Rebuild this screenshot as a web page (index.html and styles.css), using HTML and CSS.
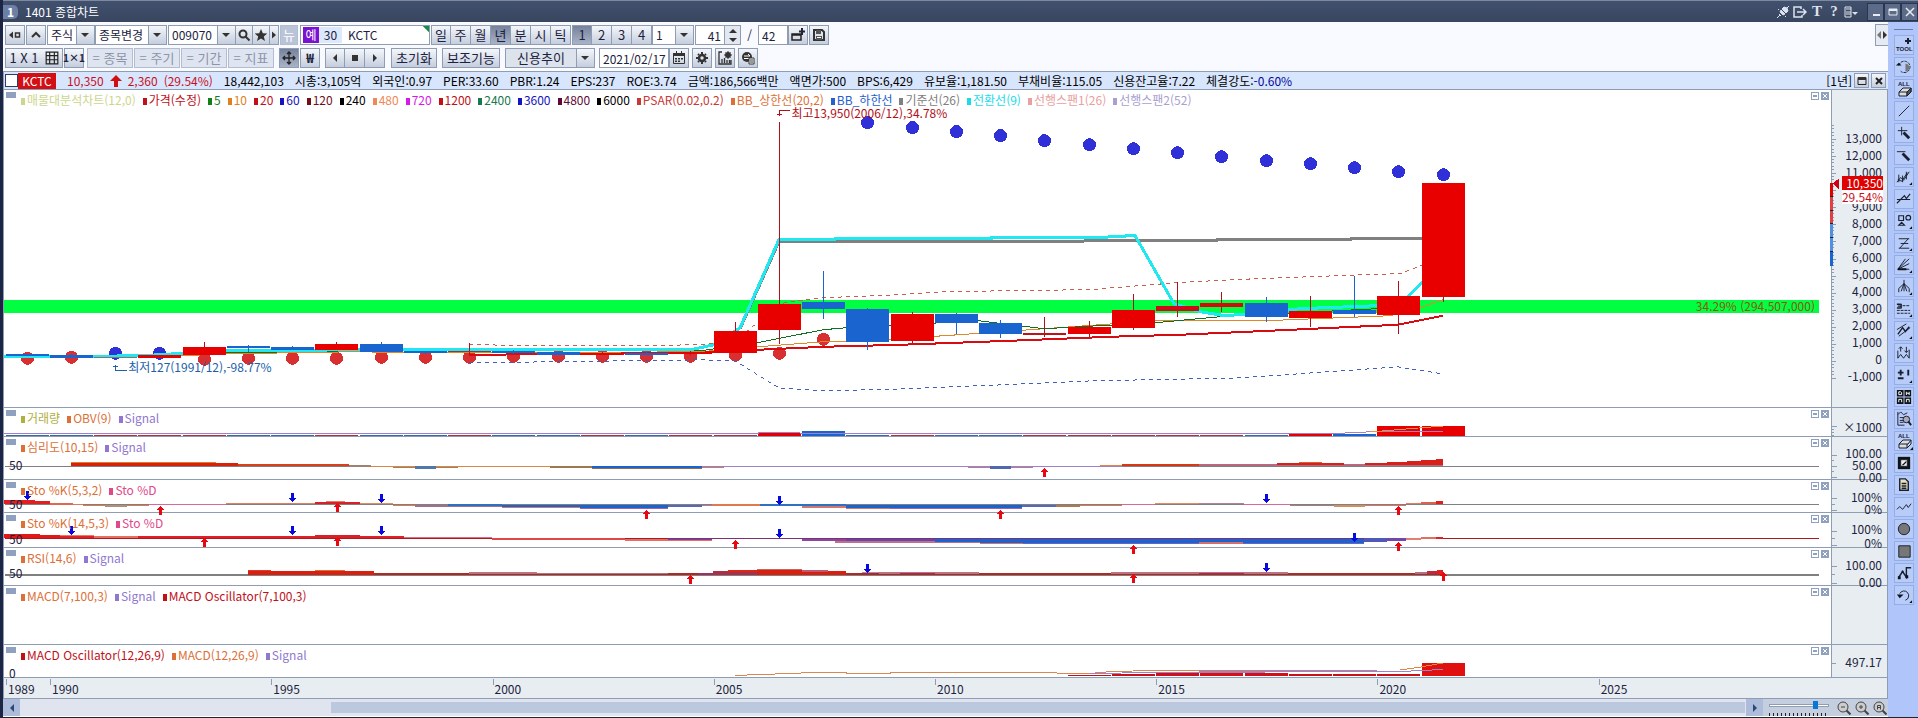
FILE: index.html
```html
<!DOCTYPE html>
<html lang="ko">
<head>
    <meta charset="UTF-8">
    <meta name="viewport" content="width=device-width, initial-scale=1.0">
    <title>1401 종합차트</title>
    <link rel="stylesheet" href="styles.css">
</head>
<body>

    <header class="titlebar">
        <span class="badge">1</span>
        <h1>1401 종합차트</h1>
        <div class="title-tools">
            <button aria-label="연결"><svg viewBox="0 0 14 14"><path d="M1 13l3-3M10 4l3-3M4 7l3 3 2-1-4-4zM6 4l4 4 2-2-1-3-3-1zM3 9l2 2M2 5l1-1M9 12l1-1" fill="#dde3ee" stroke="#dde3ee"/></svg></button>
            <button aria-label="내보내기"><svg viewBox="0 0 14 14"><path d="M8 4V2H1v10h8v-2M4 7h9M10 4l3 3-3 3" fill="none" stroke="#dde3ee" stroke-width="1.5"/></svg></button>
            <button class="serif">T</button>
            <button class="serif">?</button>
            <button aria-label="메뉴"><svg viewBox="0 0 14 14"><path d="M1 2h6v10H1zM2 4h5M2 7h5M2 9h5" fill="none" stroke="#dde3ee"/><path d="M8 7h6l-3 3z" fill="#dde3ee"/></svg></button>
        </div>
        <div class="window-buttons">
            <button aria-label="최소화"><svg viewBox="0 0 14 14"><path d="M4 9h7v2H4z" fill="#e8ecf4"/></svg></button>
            <button aria-label="최대화"><svg viewBox="0 0 14 14"><path d="M3 4h8v6H3z" fill="none" stroke="#e8ecf4"/><path d="M3 4h8v2H3z" fill="#e8ecf4"/></svg></button>
            <button aria-label="닫기"><svg viewBox="0 0 14 14"><path d="M3 3l8 8M11 3l-8 8" stroke="#e8ecf4" stroke-width="1.5"/></svg></button>
        </div>
    </header>

    <div class="workspace">
        <main>
            <div class="toolbars">
                <div class="toolbar">
                    <button class="btn" aria-label="접기"><svg viewBox="0 0 14 14"><path d="M5 3.500v7L1 7z"/><path d="M7.500 5h4v4h-4z" fill="none" stroke="#333" stroke-width="1.500"/></svg></button>
                    <button class="btn" aria-label="위로"><svg viewBox="0 0 14 14"><path d="M3 9l4-4 4 4" fill="none" stroke="#333" stroke-width="2"/></svg></button>
                    <div class="group">
                        <select class="w48" aria-label="시장"><option>주식</option></select>
                        <select class="w72" aria-label="종목변경"><option>종목변경</option></select>
                    </div>
                    <div class="group code">
                        <select class="w68" aria-label="종목코드"><option>009070</option></select>
                        <button class="btn narrow" aria-label="검색"><svg viewBox="0 0 14 14"><circle cx="6" cy="6" r="3.500" fill="none" stroke="#333" stroke-width="2"/><path d="M8.500 8.500l4 4" stroke="#333" stroke-width="2"/></svg></button>
                        <button class="btn narrow" aria-label="관심"><svg viewBox="0 0 14 14"><path d="M7 1l1.800 4.200 4.500.3-3.500 3 1.200 4.500-4-2.500L3 13l1.200-4.500-3.500-3 4.500-.3z"/></svg></button>
                        <button class="btn tiny" aria-label="더보기"><svg viewBox="0 0 8 14"><path d="M2 3.500v7L6 7z"/></svg></button>
                    </div>
                    <button class="btn off solid">뉴</button>
                    <div class="stock">
                        <b>예</b><span class="margin-rate">30</span><input aria-label="종목명" value="KCTC">
                    </div>
                    <div class="group period">
                        <button class="btn">일</button><button class="btn">주</button><button class="btn">월</button><button class="btn on">년</button><button class="btn">분</button><button class="btn">시</button><button class="btn">틱</button>
                    </div>
                    <div class="group count">
                        <button class="btn on">1</button><button class="btn">2</button><button class="btn">3</button><button class="btn">4</button>
                        <select class="w42" aria-label="주기"><option>1</option></select>
                    </div>
                    <div class="group">
                        <input class="w30 right" aria-label="조회 개수" value="41">
                        <div class="spin">
                            <button aria-label="증가"><svg viewBox="0 0 14 8"><path d="M3 6l4-4 4 4z"/></svg></button>
                            <button aria-label="감소"><svg viewBox="0 0 14 8"><path d="M3 2l4 4 4-4z"/></svg></button>
                        </div>
                    </div>
                    <span class="slash">/</span>
                    <div class="group">
                        <input class="w30" aria-label="전체 개수" value="42">
                        <button class="btn" aria-label="창 추가"><svg viewBox="0 0 14 14"><path d="M1 6h9v6H1zM1 7h9" fill="none" stroke="#222" stroke-width="1.500"/><path d="M11 0v7M8 3.500h6" stroke="#223" stroke-width="2"/></svg></button>
                    </div>
                    <button class="btn" aria-label="저장"><svg viewBox="0 0 14 14"><path d="M2 2h8l2 2v8H2z" fill="none" stroke="#333" stroke-width="2"/><path d="M4 2h5v4H4zM4 8h6v4H4z" fill="#555"/><path d="M5 9.500h4" stroke="#fff"/></svg></button>
                </div>

                <div class="toolbar">
                    <button class="btn w58">1 X 1 <svg viewBox="0 0 12 12"><path d="M1 1h10v10H1zM1 4h10M1 7.500h10M4 1v10M8 1v10" fill="none" stroke="#222"/></svg></button>
                    <button class="btn small-text">1×1</button>
                    <div class="group sync">
                        <button class="btn off w46">= 종목</button><button class="btn off w46">= 주기</button>
                        <button class="btn off w46">= 기간</button><button class="btn off w46">= 지표</button>
                    </div>
                    <button class="btn on move" aria-label="이동"><svg viewBox="0 0 14 14"><path d="M7 1v12M1 7h12M5 3l2-2 2 2M5 11l2 2 2-2M3 5L1 7l2 2M11 5l2 2-2 2" fill="none" stroke="#222" stroke-width="1.300"/></svg></button>
                    <button class="btn bold">₩</button>
                    <div class="group play">
                        <button class="btn" aria-label="이전"><svg viewBox="0 0 14 14"><path d="M9 3v8L5 7z"/></svg></button><button class="btn" aria-label="정지"><svg viewBox="0 0 14 14"><path d="M4 4h6v6H4z"/></svg></button><button class="btn" aria-label="다음"><svg viewBox="0 0 14 14"><path d="M5 3v8l4-4z"/></svg></button>
                    </div>
                    <button class="btn w46">초기화</button>
                    <button class="btn w58 aux">보조기능</button>
                    <select class="w90 face" aria-label="신용추이"><option>신용추이</option></select>
                    <div class="group date">
                        <input class="w70" aria-label="날짜" value="2021/02/17">
                        <button class="btn" aria-label="달력"><svg viewBox="0 0 14 14"><path d="M1.500 3h11v9.500h-11z" fill="none" stroke="#333"/><path d="M1 2h12v3H1zM4 0h1v2H4zM9 0h1v2H9zM3 7h2v1.500H3zM6 7h2v1.500H6zM9 7h2v1.500H9zM3 9.500h2V11H3zM6 9.500h2V11H6z"/></svg></button>
                    </div>
                    <button class="btn" aria-label="설정"><svg viewBox="0 0 14 14"><circle cx="7" cy="7" r="3" fill="none" stroke="#333" stroke-width="2.500"/><path d="M7 1v2M7 11v2M1 7h2M11 7h2M3 3l1 1M10 10l1 1M11 3l-1 1M4 10l-1 1" stroke="#333" stroke-width="2"/></svg></button>
                    <button class="btn gap" aria-label="차트 설정"><svg viewBox="0 0 14 14"><path d="M4 1H1v12h12V9M4 12V8M6.500 12V7M9 12V9M11.500 12v-3" fill="none" stroke="#333" stroke-width="1.300"/><circle cx="10" cy="4" r="2" fill="none" stroke="#333" stroke-width="2"/><path d="M10 0v8M6 4h8M7.500 1.500l5 5M12.500 1.500l-5 5" stroke="#333"/></svg></button>
                    <button class="btn gap" aria-label="차트 공유"><svg viewBox="0 0 14 14"><circle cx="6" cy="6" r="5"/><path d="M3 5h6M7 3l2 2M9 7.500H3" stroke="#fff"/><path d="M8 7h5v6H8z" fill="#fff" stroke="#333"/><path d="M9 9h3M9 11h3" stroke="#333"/></svg></button>
                </div>
                <button class="side-toggle" aria-label="도구 접기"><svg viewBox="0 0 12 14"><path d="M5 3v8L1 7z" fill="#777"/><path d="M7 3v8l4-4z" fill="#333"/></svg></button>
            </div>

            <div class="quote">
                <input type="checkbox" aria-label="KCTC 선택">
                <b class="ticker">KCTC</b>
                <div class="trade">
                    <span>10,350</span>
                    <svg viewBox="0 0 12 12"><path d="M6 0l6 6H8v6H4V6H0z"/></svg>
                    <span>2,360</span>
                    <span>(29.54%)</span>
                </div>
                <span>18,442,103</span>
                <span>시총:3,105억</span>
                <span>외국인:0.97</span>
                <span>PER:33.60</span>
                <span>PBR:1.24</span>
                <span>EPS:237</span>
                <span>ROE:3.74</span>
                <span>금액:186,566백만</span>
                <span>액면가:500</span>
                <span>BPS:6,429</span>
                <span>유보율:1,181.50</span>
                <span>부채비율:115.05</span>
                <span>신용잔고율:7.22</span>
                <span>체결강도:<em>-0.60%</em></span>
                <div class="term">
                    <span>[1년]</span>
                    <button class="btn mini" aria-label="최대화"><svg viewBox="0 0 10 10"><path d="M1 1.500h8v7H1z" fill="none" stroke="#222"/><path d="M1 1h8v3H1z"/></svg></button>
                    <button class="btn mini" aria-label="닫기"><svg viewBox="0 0 10 10"><path d="M2 2l6 6M8 2L2 8" stroke="#222" stroke-width="2"/></svg></button>
                </div>
            </div>

            <div class="chart">
                <section class="pane price">
                    <div class="plot">
                        <svg id="price" class="draw" viewBox="4 91 1827 316" preserveAspectRatio="none"></svg>
                        <div class="legend">
                            <span class="c-lime">매물대분석차트(12,0)</span><span class="c-red">가격(수정)</span><span class="c-green">5</span><span class="c-orange">10</span><span class="c-red">20</span><span class="c-blue">60</span><span class="c-maroon">120</span><span class="c-black">240</span><span class="c-salmon">480</span><span class="c-magenta">720</span><span class="c-red">1200</span><span class="c-teal">2400</span><span class="c-blue">3600</span><span class="c-plum">4800</span><span class="c-black">6000</span><span class="c-brick">PSAR(0.02,0.2)</span><span class="c-rust">BB_상한선(20,2)</span><span class="c-sky">BB_하한선</span><span class="c-gray">기준선(26)</span><span class="c-cyan">전환선(9)</span><span class="c-pink">선행스팬1(26)</span><span class="c-lilac">선행스팬2(52)</span>
                        </div>
                        <span class="note high">최고13,950(2006/12),34.78%</span>
                        <span class="note low">최저127(1991/12),-98.77%</span>
                        <span class="note band">34.29% (294,507,000)</span>
                    </div>
                    <div class="axis">
                        <svg id="price-axis" class="draw" viewBox="1832 91 55 316" preserveAspectRatio="none"></svg>
                        <ol>
                            <li>13,000</li><li>12,000</li><li>11,000</li><li></li><li>9,000</li><li>8,000</li><li>7,000</li><li>6,000</li><li>5,000</li><li>4,000</li><li>3,000</li><li>2,000</li><li>1,000</li><li>0</li><li>-1,000</li>
                        </ol>
                        <div class="now"><b>10,350</b><span>29.54%</span></div>
                    </div>
                </section>

                <section class="pane vol">
                    <div class="plot">
                        <svg id="vol" class="draw" viewBox="4 408 1827 28" preserveAspectRatio="none"></svg>
                        <div class="legend"><span class="c-olive">거래량</span><span class="c-rust">OBV(9)</span><span class="c-violet">Signal</span></div>
                    </div>
                    <div class="axis"><svg class="draw" viewBox="1832 408 55 28" preserveAspectRatio="none"><path class="tick" d="M1832 426.500h5M1832 429.500h2M1832 432.500h2M1832 435.500h2"/></svg><ol><li>×1000</li></ol></div>
                </section>

                <section class="pane psy">
                    <div class="plot">
                        <svg id="psy" class="draw" viewBox="4 437 1827 42" preserveAspectRatio="none"></svg>
                        <div class="legend"><span class="c-rust">심리도(10,15)</span><span class="c-violet">Signal</span></div>
                        <span class="base">50</span>
                    </div>
                    <div class="axis"><svg class="draw" viewBox="1832 437 55 42" preserveAspectRatio="none"><path class="tick" d="M1832 455.500h5M1832 460.500h2M1832 466.500h5M1832 471.500h2M1832 477.500h5"/></svg><ol><li>100.00</li><li>50.00</li><li>0.00</li></ol></div>
                </section>

                <section class="pane sto1">
                    <div class="plot">
                        <svg id="sto1" class="draw" viewBox="4 480 1827 32" preserveAspectRatio="none"></svg>
                        <div class="legend"><span class="c-rust">Sto %K(5,3,2)</span><span class="c-rose">Sto %D</span></div>
                        <span class="base">50</span>
                    </div>
                    <div class="axis"><svg class="draw" viewBox="1832 480 55 32" preserveAspectRatio="none"><path class="tick" d="M1832 498.500h5M1832 504.500h3M1832 510.500h5"/></svg><ol><li>100%</li><li>0%</li></ol></div>
                </section>

                <section class="pane sto2">
                    <div class="plot">
                        <svg id="sto2" class="draw" viewBox="4 513 1827 34" preserveAspectRatio="none"></svg>
                        <div class="legend"><span class="c-rust">Sto %K(14,5,3)</span><span class="c-rose">Sto %D</span></div>
                        <span class="base">50</span>
                    </div>
                    <div class="axis"><svg class="draw" viewBox="1832 513 55 34" preserveAspectRatio="none"><path class="tick" d="M1832 531.500h5M1832 538.500h3M1832 545.500h5"/></svg><ol><li>100%</li><li>0%</li></ol></div>
                </section>

                <section class="pane rsi">
                    <div class="plot">
                        <svg id="rsi" class="draw" viewBox="4 548 1827 37" preserveAspectRatio="none"></svg>
                        <div class="legend"><span class="c-rust">RSI(14,6)</span><span class="c-violet">Signal</span></div>
                        <span class="base">50</span>
                    </div>
                    <div class="axis"><svg class="draw" viewBox="1832 548 55 37" preserveAspectRatio="none"><path class="tick" d="M1832 566.500h5M1832 574.500h3M1832 583.500h5"/></svg><ol><li>100.00</li><li>0.00</li></ol></div>
                </section>

                <section class="pane macd1">
                    <div class="plot">
                        <div class="legend"><span class="c-rust">MACD(7,100,3)</span><span class="c-violet">Signal</span><span class="c-red">MACD Oscillator(7,100,3)</span></div>
                    </div>
                    <div class="axis"></div>
                </section>

                <section class="pane macd2">
                    <div class="plot">
                        <svg id="macd" class="draw" viewBox="4 645 1827 32" preserveAspectRatio="none"></svg>
                        <div class="legend"><span class="c-red">MACD Oscillator(12,26,9)</span><span class="c-rust">MACD(12,26,9)</span><span class="c-violet">Signal</span></div>
                        <span class="base">0</span>
                    </div>
                    <div class="axis"><svg class="draw" viewBox="1832 645 55 32" preserveAspectRatio="none"><path class="tick" d="M1832 663.500h4"/></svg><ol><li>497.17</li></ol></div>
                </section>

                <div class="years">
                    <span>1989</span><span>1990</span><span>1995</span><span>2000</span><span>2005</span><span>2010</span><span>2015</span><span>2020</span><span>2025</span>
                </div>
            </div>

            <footer class="scroll">
                <button class="scroll-end" aria-label="왼쪽"><svg viewBox="0 0 10 10"><path d="M7 1v8L3 5z"/></svg></button>
                <div class="track"><div class="thumb"></div></div>
                <button class="scroll-end" aria-label="오른쪽"><svg viewBox="0 0 10 10"><path d="M3 1v8l4-4z"/></svg></button>
                <div class="zoom">
                    <input type="range" min="0" max="100" value="80" aria-label="확대 비율">
                    <button aria-label="축소"><svg viewBox="0 0 14 14"><circle cx="6" cy="6" r="5"/><path class="handle" d="M9.500 9.500l4 4"/><path d="M4 6h4"/></svg></button>
                    <button aria-label="확대"><svg viewBox="0 0 14 14"><circle cx="6" cy="6" r="5"/><path class="handle" d="M9.500 9.500l4 4"/><path d="M4 6h4M6 4v4"/></svg></button>
                    <button aria-label="전체"><svg viewBox="0 0 14 14"><circle cx="6" cy="6" r="5"/><path class="handle" d="M9.500 9.500l4 4"/><path d="M4.500 8.500V4.500h3v4M4.500 6.500h3"/></svg></button>
                </div>
            </footer>
        </main>

        <aside class="dock">
            <button aria-label="도구 추가"><svg viewBox="0 0 18 18"><path class="bold" d="M13 2v6M10 5h6"/><text x="1" y="15">TOOL</text></svg></button>
            <button aria-label="회전"><svg viewBox="0 0 19 19"><path d="M4 8a6 6 0 1 1 2 6" stroke-dasharray="3 1"/><path class="fill" d="M1 8h6l-3-3z"/><path d="M11 6a4 4 0 0 1 0 8z" fill="#777" stroke="none"/></svg></button>
            <button aria-label="모두 지우기"><svg viewBox="0 0 18 18"><text x="3" y="6">ALL</text><path d="M4 12l4-4h8l-3 4zM4 12v4h8v-4M12 16l4-4V8" fill="#ddd"/><path d="M12 12l4-4v4l-4 4z" fill="#555"/></svg></button>
            <button aria-label="선"><svg viewBox="0 0 19 19"><path d="M4 15L15 4"/></svg></button>
            <button aria-label="십자 그리기"><svg viewBox="0 0 19 19"><path d="M3 7h10M7 3v9"/><path class="thick" d="M9 9l6 6"/></svg></button>
            <button aria-label="수평선 그리기"><svg viewBox="0 0 19 19"><path d="M2 6h9"/><path class="thick" d="M8 8l7 7"/></svg></button>
            <button aria-label="파동"><svg viewBox="0 0 19 19"><path d="M4 7v8M8 8v7M12 4v8M2 15l4-5 3 3 6-9M3 12l4 2 6-9" /><path class="fill" d="M18 15v3h-3z"/></svg></button>
            <button aria-label="추세선"><svg viewBox="0 0 19 19"><path d="M2 14l8-8 2 3 4-5M2 10h14" stroke-width="1.200"/></svg></button>
            <button aria-label="도형"><svg viewBox="0 0 19 19"><path d="M4 4h5v5H4zM4 14l3-3 3 3z" stroke-width="1.200"/><circle cx="14" cy="6" r="2.500" stroke-width="1.200"/><path class="fill" d="M18 15v3h-3z"/></svg></button>
            <button aria-label="지그재그"><svg viewBox="0 0 19 19"><path d="M4 5h11M4 15h11M14 5L5 15M6 10h8"/><path class="fill" d="M18 15v3h-3z"/></svg></button>
            <button aria-label="팬"><svg viewBox="0 0 19 19"><path d="M3 14h12M3 14L15 3M3 14l12-6M3 14l8-11"/><path class="fill" d="M18 15v3h-3zM3 13h9v2H3z"/></svg></button>
            <button aria-label="갈래"><svg viewBox="0 0 19 19"><path d="M9.500 2v12M9.500 6L4 11v4M9.500 6l5.500 5v4M9.500 6l-3 8M9.500 6l3 8"/><path class="fill" d="M18 15v3h-3z"/></svg></button>
            <button aria-label="구간선"><svg viewBox="0 0 19 19"><path d="M2 4.500h4M3 6.500h3M2 8.500h4M6.500 4v5" stroke-width="1.500"/><path d="M8 6h8M2 11h14M2 14h14" stroke-dasharray="3 1"/><path class="fill" d="M18 15v3h-3z"/></svg></button>
            <button aria-label="채널"><svg viewBox="0 0 19 19"><path d="M2 8L12 2M4 15L16 6"/><path d="M3 13l5-7 3 4 4-5" stroke-width="1.500"/><path class="fill" d="M18 15v3h-3z"/></svg></button>
            <button aria-label="신호"><svg viewBox="0 0 19 19"><path d="M3 7v8l3-4 3 4 3-4 3 4V6M6 8V3M4 5l2-2 2 2M12 3v6M10 7l2 2 2-2"/></svg></button>
            <button aria-label="수치"><svg viewBox="0 0 19 19"><path class="bold" d="M3 7h6M6 4v6M14 4v6M3 13h6"/><path class="fill" d="M18 15v3h-3z"/></svg></button>
            <button aria-label="주기"><svg viewBox="0 0 19 19"><path class="fill" d="M2 2h7v7H2zM10 2h7v7h-7zM2 10h7v7H2zM10 10h7v7h-7z"/><path class="white" d="M4 4h2l1 1v2H4zM12 4v3l1.500-2L15 7V4M4 15v-3h3v3M12 15v-3h3v3"/></svg></button>
            <button aria-label="차트 검색"><svg viewBox="0 0 19 19"><path d="M3 2v14h7M3 5l3-3 3 3 4-2M5 8h5M5 11h4M5 13h4"/><circle cx="12" cy="10" r="3.500" fill="#aab"/><path class="bold" d="M14 12l3 4"/></svg></button>
            <button aria-label="전체 삭제"><svg viewBox="0 0 18 18"><text x="3" y="6">ALL</text><path d="M4 12l4-4h8l-3 4zM4 12v4h8v-4M12 16l4-4V8" fill="#ddd"/><path class="fill" d="M18 15v3h-3z"/></svg></button>
            <button aria-label="색 반전"><svg viewBox="0 0 19 19"><path class="fill" d="M3 3h13v13H3z"/><path d="M6 6h7v7H6z" fill="#eee"/><path class="fill" d="M7 12l5-5v2l-3 3z"/></svg></button>
            <button aria-label="문서"><svg viewBox="0 0 19 19"><path d="M5 3h6l3 3v9H5z" fill="#e8e0c0" stroke-width="1.500"/><path d="M7 8h5M7 10.500h5M7 13h5" stroke-width="1.500"/></svg></button>
            <button aria-label="꺾은선"><svg viewBox="0 0 19 19"><path d="M2 12l3-3 3 3 4-5 2 3 3-4"/></svg></button>
            <button aria-label="원"><svg viewBox="0 0 19 19"><circle cx="9.500" cy="9.500" r="6" fill="#777"/></svg></button>
            <button aria-label="사각형"><svg viewBox="0 0 19 19"><path d="M4 4h12v12H4z" fill="#777"/></svg></button>
            <button aria-label="경로"><svg viewBox="0 0 19 19"><path d="M4 14l4-6 4 6V4h5" stroke-width="1.500"/><path class="fill" d="M3 13h3v3H3zM11 12h3v3h-3zM7 7h2v2H7z"/></svg></button>
            <button aria-label="되돌리기"><svg viewBox="0 0 19 19"><path d="M5 8a5 5 0 1 1 6 7"/><path class="fill" d="M2 9h7l-4 4zM18 15v3h-3z"/></svg></button>
        </aside>
    </div>

    <script src="chart.js"></script>
</body>
</html>
```
FILE: styles.css
```css
* {
    margin: 0;
    padding: 0;
    box-sizing: border-box;
}

body {
    font-family: "Noto Sans CJK KR", sans-serif;
    font-size: 12px;
    line-height: 16px;
    color: #1c2340;
    background: #f8faff;
    min-height: 100vh;
    display: flex;
    flex-direction: column;
    border-left: 3px solid #1d2545;
    border-bottom: 1px solid #20242c;
    overflow: hidden;
    white-space: nowrap;
}

button,
input,
select {
    font: inherit;
    color: inherit;
    border: 1px solid #8f9db3;
    border-radius: 0;
}

button {
    display: flex;
    align-items: center;
    justify-content: center;
    background: none;
    cursor: pointer;
}

svg {
    display: block;
    flex: none;
}

/* Title bar */
.titlebar {
    height: 22px;
    display: flex;
    align-items: center;
    background: linear-gradient(#41506e, #38465f);
    border-top: 1px solid #7d899c;
    color: #fff;
}

.titlebar h1 {
    font-size: 12px;
    font-weight: normal;
    margin-left: 7px;
}

.badge {
    width: 15px;
    height: 14px;
    line-height: 14px;
    background: #6c7fa5;
    border-radius: 0 5px 5px 0;
    font-size: 12px;
    font-weight: bold;
    text-align: center;
}

.title-tools {
    display: flex;
    gap: 3px;
    margin-left: auto;
}

.title-tools button,
.window-buttons button {
    width: 14px;
    height: 16px;
    border: none;
}

.title-tools svg,
.window-buttons svg {
    width: 14px;
    height: 14px;
}

.title-tools .serif {
    font: bold 15px "Liberation Serif", serif;
    color: #dde3ee;
}

.window-buttons {
    display: flex;
    margin-left: 9px;
}

.window-buttons button {
    width: 17px;
    height: 18px;
    border: 1px solid #2a3550;
    background: #5b6b88;
}

.workspace {
    flex: 1;
    display: flex;
    min-height: 0;
}

main {
    flex: 1;
    min-width: 0;
    display: flex;
    flex-direction: column;
}

/* Toolbars */
.toolbars {
    position: relative;
    padding: 3px 0 3px 2px;
    display: flex;
    flex-direction: column;
    gap: 3px;
}

.toolbar {
    display: flex;
    gap: 1px;
}

.group {
    display: flex;
}

.btn {
    width: 20px;
    height: 20px;
    font-size: 13px;
    background: linear-gradient(#f4f6fa, #c5cede);
}

.group .btn + .btn {
    border-left: none;
}

.btn svg {
    width: 14px;
    height: 14px;
    fill: #333;
}

.btn.narrow {
    width: 17px;
    border-left: none;
}

.btn.tiny {
    width: 9px;
}

.btn.tiny svg {
    width: 8px;
}

.btn.on {
    background: linear-gradient(#76829c, #a9b3c8);
}

.btn.off {
    color: #8b94a8;
    border-color: #b4bdd0;
    background: #dfe5f0;
}

.btn.solid {
    width: 18px;
    margin-right: 1px;
    color: #fff;
    background: #bac4d8;
}

.btn.bold {
    font-weight: bold;
}

.btn.small-text {
    font-size: 10px;
    font-weight: bold;
}

.btn.mini {
    width: 15px;
    height: 15px;
}

.btn.mini svg {
    width: 10px;
    height: 10px;
}

.toolbar input,
.toolbar select {
    height: 20px;
    padding-left: 3px;
    background-color: #fff;
}

.toolbar select {
    appearance: none;
    background-image: url("data:image/svg+xml,%3Csvg xmlns='http://www.w3.org/2000/svg' width='18' height='18'%3E%3Cpath d='M5 7h8l-4 4z' fill='%23333'/%3E%3Cpath d='M.5 0v18' stroke='%238f9db3'/%3E%3C/svg%3E"), linear-gradient(#f4f6fa, #c5cede);
    background-position: right center;
    background-size: 18px 18px;
    background-repeat: no-repeat;
}

.toolbar select.face {
    font-size: 13px;
    padding-left: 11px;
    margin-left: 4px;
    background-color: #dde3ed;
}

.toolbar .right {
    text-align: right;
    padding-right: 3px;
}

.btn.w46 { width: 46px; }
.btn.w58 { width: 58px; gap: 6px; }
.w30 { width: 30px; }
.w42 { width: 42px; }
.w48 { width: 48px; }
.w68 { width: 68px; }
.w70 { width: 70px; }
.w72 { width: 72px; }
.w90 { width: 90px; }

.stock {
    width: 130px;
    height: 20px;
    display: flex;
    align-items: center;
    padding: 0 2px;
    border: 1px solid #8f9db3;
    background: linear-gradient(225deg, #178a4a 4px, #fff 5px);
}

.stock b {
    width: 16px;
    background: #7a12d0;
    color: #fff;
    font-weight: normal;
    text-align: center;
}

.stock .margin-rate {
    width: 23px;
    background: #dce8fb;
    text-align: center;
}

.stock input {
    width: 70px;
    height: 16px;
    border: none;
    padding-left: 6px;
    background: none;
}

.spin {
    width: 16px;
    height: 20px;
    border: 1px solid #8f9db3;
    border-left: none;
    background: #e2e7f0;
}

.spin button {
    width: 15px;
    height: 9px;
    border: none;
}

.spin svg {
    width: 14px;
    height: 8px;
    fill: #333;
}

.slash {
    width: 15px;
    line-height: 20px;
    text-align: center;
}

.sync {
    margin-left: 2px;
    gap: 1px;
}

.group.sync .btn {
    border-left: 1px solid #b4bdd0;
}

.toolbar .move,
.play,
.aux {
    margin-left: 4px;
}

.play {
    margin-right: 5px;
}

.date {
    margin: 0 2px 0 3px;
}

.gap {
    margin-left: 2px;
}

.side-toggle {
    position: absolute;
    top: 2px;
    right: 0;
    width: 13px;
    height: 22px;
    background: #e6eaf2;
    border-right: none;
}

.side-toggle svg {
    width: 12px;
    height: 14px;
}

/* Quote line */
.quote {
    height: 19px;
    display: flex;
    align-items: center;
    gap: 11px;
    padding: 0 2px 0 1px;
    background: #d8e6fd;
    border: 1px solid #8f9db3;
    border-right: none;
    color: #000;
}

.quote input {
    appearance: none;
    width: 13px;
    height: 13px;
    border: 1px solid #333c60;
    background: #fff;
}

.quote .ticker {
    width: 38px;
    margin-left: -11px;
    background: #d20f14;
    color: #fff;
    font-weight: normal;
    text-align: center;
}

.trade {
    display: flex;
    align-items: center;
    gap: 6px;
    color: #c8101c;
}

.trade svg {
    width: 12px;
    height: 12px;
    fill: #d01010;
}

.quote em {
    color: #0808a0;
    font-style: normal;
}

.term {
    display: flex;
    align-items: center;
    gap: 2px;
    margin-left: auto;
}

/* Chart panes */
.chart {
    flex: 1;
    display: flex;
    flex-direction: column;
    border-left: 1px solid #8f9db3;
    background: #fff;
}

.pane {
    display: flex;
    border-bottom: 1px solid #8f9db3;
}

.price { flex: 1; }
.vol { height: 29px; }
.psy { height: 43px; }
.sto1 { height: 33px; }
.sto2 { height: 35px; }
.rsi { height: 38px; }
.macd1 { height: 59px; }
.macd2 { height: 33px; }

.plot {
    position: relative;
    flex: 1;
}

.draw {
    position: absolute;
    inset: 0;
    width: 100%;
    height: 100%;
    overflow: visible;
    shape-rendering: crispEdges;
}

.tick {
    stroke: #8f9db3;
}

.legend {
    position: relative;
    z-index: 1;
    display: flex;
    gap: 7px;
    padding: 3px 0 0 17px;
    line-height: 14px;
}

.legend::before {
    content: "";
    position: absolute;
    left: 2px;
    top: 2px;
    width: 10px;
    height: 6px;
    background: #8fa1bf;
}

.legend span::before {
    content: "";
    display: inline-block;
    width: 4px;
    height: 7px;
    margin-right: 2px;
    background: currentColor;
}

.pane-buttons {
    position: absolute;
    top: 2px;
    right: 2px;
    display: flex;
    gap: 2px;
}

.pane-buttons button {
    width: 8px;
    height: 8px;
    border-color: #8fa1bf;
}

.pane-buttons svg {
    width: 6px;
    height: 6px;
    stroke: #8fa1bf;
}

.pane-buttons .close {
    background: #8fa1bf;
}

.pane-buttons .close svg {
    stroke: #fff;
}

.c-lime { color: #ccd68e; }
.c-red { color: #c0101a; }
.c-green { color: #108018; }
.c-orange { color: #e08020; }
.c-blue { color: #1414c0; }
.c-maroon { color: #6e1018; }
.c-black { color: #000; }
.c-salmon { color: #f08858; }
.c-magenta { color: #d818e8; }
.c-teal { color: #187850; }
.c-plum { color: #600838; }
.c-brick { color: #c83838; }
.c-rust { color: #dc7038; }
.c-sky { color: #2460d0; }
.c-gray { color: #808080; }
.c-cyan { color: #18dce8; }
.c-pink { color: #e8a0a0; }
.c-lilac { color: #a8a0d0; }
.c-olive { color: #b0b040; }
.c-violet { color: #9078d0; }
.c-rose { color: #e04888; }

.note {
    position: absolute;
    line-height: 12px;
}

.high {
    left: 43.1%;
    top: 17px;
    color: #b01018;
}

.low {
    left: 6.8%;
    top: 271px;
    color: #2060a8;
}

.band {
    right: 16px;
    top: 210px;
    color: #8a5a10;
}

.base {
    position: absolute;
    left: 5px;
    bottom: 7px;
    line-height: 14px;
}

.sto1 .base,
.sto2 .base { bottom: 1px; }
.rsi .base { bottom: 5px; }
.macd2 .base { bottom: -3px; }

.axis {
    position: relative;
    width: 57px;
    border-left: 1px solid #8f9db3;
    border-right: 1px solid #8f9db3;
    background: #e8edf1;
}

.axis ol {
    position: relative;
    z-index: 1;
    height: 100%;
    display: flex;
    flex-direction: column;
    justify-content: flex-end;
    list-style: none;
    text-align: right;
    padding-right: 5px;
    line-height: 12px;
}

.price .axis ol {
    justify-content: flex-start;
    padding-top: 39px;
    line-height: 17px;
}

.price .axis li {
    height: 17px;
}

.vol .axis ol { padding-bottom: 3px; }
.psy .axis ol { top: 4px; }
.sto1 .axis ol { top: 3px; }
.sto2 .axis ol { top: 3px; line-height: 14px; }
.rsi .axis ol { top: 5px; line-height: 17px; }
.macd2 .axis ol { padding-bottom: 9px; }

.now {
    position: absolute;
    z-index: 2;
    top: 86px;
    right: 4px;
    min-width: 38px;
    line-height: 14px;
    text-align: right;
    background: #fff;
    color: #c8101c;
}

.now b {
    display: block;
    background: #e00000;
    color: #fff;
    font-weight: normal;
}

.years {
    position: relative;
    display: grid;
    grid-template-columns: 44fr repeat(7, 221fr) 288fr;
    height: 21px;
    padding-left: 2px;
    background: #e8edf1;
    border-bottom: 1px solid #8f9db3;
    border-right: 1px solid #8f9db3;
}

.years span {
    padding: 3px 0 0 2px;
    background: linear-gradient(#8f9db3, #8f9db3) 0 1px / 1px 6px no-repeat;
}

/* Bottom scrollbar */
.scroll {
    height: 18px;
    display: flex;
    background: #dfe4ee;
    border-bottom: 1px solid #fff;
}

.scroll-end {
    width: 17px;
    border: none;
    background: #aebcdc;
}

.scroll-end svg {
    width: 10px;
    height: 10px;
    fill: #2c4878;
}

.track {
    flex: 1;
    display: flex;
    padding: 3px 0;
}

.thumb {
    margin: 0 1px 0 18%;
    flex: 1;
    background: #bbc8dd;
}

.zoom {
    width: 125px;
    display: flex;
    align-items: center;
    gap: 4px;
    padding-left: 6px;
    background: #c5cede;
}

.zoom input {
    appearance: none;
    width: 60px;
    height: 16px;
    margin-right: 4px;
    border: none;
    background:
        repeating-linear-gradient(90deg, #222 0 1px, transparent 1px 4px) 0 100% / 100% 3px no-repeat,
        linear-gradient(#fff, #fff) 1px 5px / 58px 1px no-repeat,
        linear-gradient(#8f9db3, #8f9db3) 0 4px / 100% 3px no-repeat;
}

.zoom input::-webkit-slider-thumb {
    appearance: none;
    width: 5px;
    height: 8px;
    margin-bottom: 5px;
    background: #0878d8;
}

.zoom button {
    width: 14px;
    height: 14px;
    border: none;
}

.zoom svg {
    width: 14px;
    height: 14px;
    fill: #ccc;
    stroke: #444;
}

.zoom .handle {
    stroke-width: 2;
}

/* Drawing tools */
.dock {
    width: 30px;
    padding: 13px 4px 0 5px;
    display: flex;
    flex-direction: column;
    align-items: center;
    gap: 2px;
    background: linear-gradient(#6c7ea8, #6c7ea8) 6px 7px / 19px 1px no-repeat, #b0c6fa;
}

.dock button {
    width: 20px;
    height: 20px;
    border: 1px solid #94aee4;
    background: #b8ccfa;
}

.dock svg {
    width: 18px;
    height: 18px;
    fill: none;
    stroke: #182030;
}

.dock .bold { stroke-width: 2; }
.dock .thick { stroke-width: 3; }
.dock .white { stroke: #fff; }

.dock .fill {
    fill: #101418;
    stroke: none;
}

.dock text {
    font: bold 6px "Liberation Sans", sans-serif;
    fill: #182030;
    stroke: none;
}
```
FILE: chart.js
```js
const NS = "http://www.w3.org/2000/svg";
const RED = "#e80000";
const BLUE = "#1a64d0";

function add(svg, name, attrs) {
    const el = document.createElementNS(NS, name);
    for (const key in attrs) el.setAttribute(key, attrs[key]);
    svg.appendChild(el);
}

const $ = id => document.getElementById(id);
const rect = (svg, x1, x2, y1, y2, fill) => add(svg, "rect", { x: x1, y: y1, width: x2 - x1, height: y2 - y1, fill });
const line = (svg, points, stroke, width = 1, dash = "none") =>
    add(svg, "polyline", { points, stroke, fill: "none", "stroke-width": width, "stroke-dasharray": dash });
const dot = (svg, year, y, fill) => add(svg, "circle", { cx: yearX(year) + 0.5, cy: y + 0.5, r: 6.5, fill });

// centre of a yearly candle
const yearX = year => Math.floor(27 + (year - 1989) * 44.25);

// up = true draws a red arrow pointing up
function arrow(svg, x, y, up) {
    const d = up ? `M${x} ${y}l4 4h-2v5h-3v-5h-3z` : `M${x} ${y + 9}l4 -4h-2v-5h-3v5h-3z`;
    add(svg, "path", { d, fill: up ? "#e80810" : "#0808e0" });
}

// year, colour, body top, body bottom, high, low
const candles = [
    [1989, BLUE, 354, 356, 354, 356], [1990, BLUE, 355, 358, 354, 358], [1991, "#907060", 357, 358, 357, 358],
    [1992, RED, 355, 358, 355, 358], [1993, RED, 347, 355, 342, 355], [1994, BLUE, 346, 348, 345, 352],
    [1995, BLUE, 347, 350, 346, 350], [1996, RED, 344, 350, 342, 350], [1997, BLUE, 344, 352, 342, 352],
    [1998, BLUE, 351, 353, 351, 354], [1999, "#a03030", 351, 352, 343, 355], [2000, BLUE, 351, 353, 350, 354],
    [2001, BLUE, 352, 355, 351, 355], [2002, RED, 353, 355, 352, 355], [2003, BLUE, 353, 355, 352, 355],
    [2004, RED, 352, 354, 351, 355], [2005, RED, 331, 353, 322, 353], [2006, RED, 304, 330, 123, 344],
    [2007, BLUE, 302, 309, 271, 319], [2008, BLUE, 309, 342, 308, 350], [2009, RED, 314, 341, 312, 343],
    [2010, BLUE, 314, 323, 313, 334], [2011, BLUE, 323, 334, 320, 338], [2012, "#c01018", 333, 335, 317, 337],
    [2013, RED, 327, 334, 321, 337], [2014, RED, 310, 328, 294, 330], [2015, "#d00818", 306, 311, 282, 317],
    [2016, "#d80810", 303, 307, 292, 312], [2017, BLUE, 303, 317, 297, 322], [2018, RED, 311, 318, 296, 327],
    [2019, BLUE, 310, 314, 276, 317], [2020, RED, 296, 315, 281, 334], [2021, RED, 184, 297, 184, 302]
];

function drawPrice() {
    const svg = $("price");
    rect(svg, 4, 1819, 300, 313, "#00ff40");

    // parabolic SAR dots
    const low = [358, 357, 0, 0, 359, 358, 358, 358, 357, 357, 357, 356, 356, 356, 356, 356, 355, 353, 339];
    low.forEach((y, i) => y && dot(svg, 1989 + i, y, "#d83030"));
    const high = [123, 128, 132, 136, 141, 145, 149, 153, 157, 161, 164, 168, 172, 175];
    high.forEach((y, i) => dot(svg, 2008 + i, y, "#3030d8"));
    [1991, 1992].forEach(year => dot(svg, year, 353, "#3030d8"));

    // averages
    line(svg, "160,357 226,354 350,352 469,353 700,352 757,347 823,342 868,341 958,335 1030,330 1100,325 1155,321 1265,321 1390,316 1420,308 1443,300", "#e08828");
    line(svg, "226,353 350,351 700,351 757,343 823,330 846,328 979,321 1044,329 1098,326 1155,323 1220,317 1377,309", "#107020");
    line(svg, "469,355 700,353 735,351 779,349 823,347 900,345 1010,341 1110,337 1180,335 1270,331 1398,325 1443,316", "#d80c10", 2);

    // bands
    line(svg, "469,345 600,346 700,345 735,342 779,304 823,298 880,296 946,292 1090,290 1178,283 1234,280 1340,276 1400,274 1443,258", "#c86050", 1, "4 4");
    line(svg, "469,363 700,360 735,361 779,388 823,391 900,389 1000,385 1090,381 1240,378 1398,367 1443,374", "#4060c0", 1, "4 4");

    // base and conversion lines
    line(svg, "740,329 779,242 1022,242 1288,240 1425,239", "#808080", 3);
    line(svg, "4,357 140,356 226,351 350,350 420,350 690,350 714,345 740,328 779,240 900,239 1100,238 1135,236 1174,304 1200,312 1225,316 1265,313 1300,309 1377,306 1405,300 1443,262", "#20e8f0", 3);

    candles.forEach(([year, color, top, bottom, hi, lo]) => {
        const x = yearX(year);
        rect(svg, x, x + 1, hi, lo, color === BLUE ? BLUE : "#b01018");
        rect(svg, x - 21, x + 22, top, bottom, color);
    });
    line(svg, "1420,308 1443,300", "#e08828");

    // pointers of the high and low notes
    line(svg, "790,111.500 779.500,111.500 779.500,117", "#b01018");
    line(svg, "777,115.500 782,115.500", "#b01018");
    line(svg, "127,370.500 115.500,370.500 115.500,365", "#2060a8");
    line(svg, "113,366.500 118,366.500", "#2060a8");

    // price scale
    const axis = $("price-axis");
    for (let i = 0; i <= 74; i++) {
        const y = Math.round(126 + i * 3.4);
        rect(axis, 1832, (i + 1) % 5 ? 1834 : 1836, y, y + 1, "#8f9db3");
    }
    rect(axis, 1830, 1833, 184, 225, "#e04040");
    rect(axis, 1830, 1833, 184, 198, "#e00000");
    rect(axis, 1830, 1833, 225, 252, "#5090e0");
    rect(axis, 1830, 1833, 252, 266, "#1a64d0");
    [197, 211, 224, 238, 251].forEach(y => rect(axis, 1830, 1833, y, y + 1, "#202040"));
    add(axis, "path", { d: "M1833 184l6 -5v11z", fill: "#d00010" });
}

function drawVolume() {
    const svg = $("vol");
    const tops = { 2006: 433, 2007: 431, 2018: 433, 2019: 434, 2020: 426, 2021: 426 };
    candles.forEach(([year, color]) => {
        const x = yearX(year);
        const top = tops[year] || 435;
        rect(svg, x - 21, x + 22, top, 436, color === BLUE ? (top === 435 ? "#3868a8" : BLUE) : (top > 434 ? "#b03040" : RED));
    });
    line(svg, "4,433.500 757,433.500 760,432.500 790,432.500 810,433.500 1334,433.500 1377,431.500 1443,431.500", "#a080c8");
    line(svg, "1370,432 1443,426", "#f09040");
}

// x1, x2, top, bottom, fill
const areas = {
    psy: [
        [71, 216, 462, 466, "#d8200c"], [71, 216, 462, 463, "#d88030"], [216, 238, 463, 466, "#d8200c"],
        [238, 349, 464, 466, "#d8401c"], [349, 371, 465, 467, "#a08070"], [371, 570, 466, 467, "#d88848"],
        [393, 458, 467, 468, "#a08060"], [415, 436, 466, 469, "#5078a8"], [550, 592, 466, 468, "#a07850"],
        [592, 702, 466, 468, BLUE], [592, 702, 468, 469, "#907050"], [702, 724, 466, 468, "#b08090"],
        [724, 1122, 466, 467, "#a080c8"], [968, 1033, 467, 468, "#b08090"], [990, 1011, 466, 469, "#5068b0"],
        [1100, 1122, 465, 466, "#e08848"], [1122, 1199, 464, 466, "#d83818"], [1199, 1443, 464, 466, "#b86880"],
        [1277, 1344, 463, 465, "#d82018"], [1299, 1322, 462, 463, "#d86030"], [1365, 1387, 463, 465, "#d82018"],
        [1387, 1407, 462, 465, "#d82018"], [1407, 1421, 461, 465, "#d82018"], [1421, 1443, 460, 465, "#d82018"],
        [1436, 1443, 459, 465, "#d82018"]
    ],
    sto1: [
        [4, 35, 500, 504, "#e02020"], [35, 50, 501, 504, "#e02020"], [50, 73, 503, 505, "#e06850"],
        [73, 83, 504, 505, "#d08060"], [83, 149, 505, 506, "#e07848"], [105, 127, 505, 507, "#b09078"],
        [149, 226, 504, 505, "#d868a0"], [226, 315, 503, 504, "#e08060"], [315, 360, 502, 504, "#d82028"],
        [326, 345, 501, 502, "#e08060"], [360, 393, 503, 504, "#e09060"], [393, 415, 505, 506, "#e07850"],
        [415, 502, 505, 507, "#a07090"], [448, 502, 504, 506, "#3070c0"], [502, 668, 505, 508, BLUE],
        [502, 580, 507, 508, "#d07870"], [580, 668, 508, 509, "#a068a0"], [668, 702, 505, 507, "#5868b8"],
        [702, 712, 505, 506, "#b07898"], [712, 760, 504, 506, "#e07850"], [760, 846, 504, 506, "#3070c0"],
        [802, 846, 506, 508, "#d07870"], [846, 1022, 505, 508, BLUE], [846, 890, 508, 509, "#d07870"],
        [890, 1022, 508, 509, "#a068a0"], [1022, 1056, 505, 507, "#5868b8"], [1056, 1080, 505, 507, "#b07850"],
        [1080, 1122, 505, 506, "#e07850"], [1122, 1155, 504, 505, "#d868a0"], [1155, 1199, 503, 504, "#e09060"],
        [1199, 1244, 503, 504, "#b080a0"], [1244, 1290, 504, 505, "#d868a0"], [1290, 1334, 505, 506, "#a08080"],
        [1334, 1365, 505, 507, "#d09060"], [1365, 1406, 505, 506, "#e07060"], [1406, 1421, 503, 504, "#e08060"],
        [1421, 1443, 502, 504, "#e06050"], [1436, 1443, 501, 504, "#e02020"]
    ],
    sto2: [
        [4, 40, 534, 538, "#e01818"], [40, 60, 535, 538, "#e01818"], [60, 94, 535, 536, "#e08060"],
        [60, 345, 536, 538, "#e02028"], [94, 138, 536, 538, "#e87060"], [315, 360, 535, 538, "#d82028"],
        [360, 404, 536, 538, "#e02028"], [404, 492, 537, 538, "#d87088"], [492, 625, 538, 540, "#e04848"],
        [625, 712, 539, 541, "#e07068"], [668, 712, 538, 540, "#7840a0"], [712, 757, 538, 539, "#e89080"],
        [757, 802, 538, 539, "#e02040"], [802, 846, 538, 541, "#8848a0"], [846, 935, 538, 542, "#6048b0"],
        [835, 935, 541, 543, "#c07088"], [935, 1364, 538, 543, BLUE], [935, 980, 542, 543, "#c07088"],
        [980, 1023, 543, 544, "#e07060"], [1023, 1364, 543, 544, "#7060c0"], [1199, 1243, 542, 544, "#d07070"],
        [1364, 1387, 538, 542, "#5058b8"], [1387, 1406, 538, 541, "#7048a8"], [1406, 1421, 538, 540, "#e08070"],
        [1421, 1443, 537, 539, "#e07060"], [1436, 1443, 537, 539, "#e02020"], [668, 1364, 538, 539, "#803070"]
    ],
    rsi: [
        [248, 374, 571, 575, "#d82010"], [248, 271, 570, 571, "#d84020"], [315, 345, 570, 571, "#d87030"],
        [374, 1443, 573, 575, "#b02820"], [469, 537, 572, 574, "#c07080"], [537, 668, 573, 574, "#b87080"],
        [698, 713, 573, 575, "#a03060"], [713, 757, 571, 575, "#a83048"], [728, 757, 570, 572, "#d82818"],
        [757, 802, 569, 575, "#d82010"], [757, 802, 569, 570, "#c06860"], [802, 846, 571, 575, "#d82010"],
        [802, 828, 570, 572, "#c05870"], [862, 879, 572, 573, "#b088c0"], [879, 979, 572, 574, "#c07080"],
        [900, 935, 573, 574, "#a82858"], [1111, 1288, 572, 574, "#c07080"], [1199, 1244, 573, 574, "#a82858"],
        [1415, 1443, 572, 574, "#b07088"], [1427, 1443, 571, 574, "#c02840"], [1437, 1443, 570, 574, "#e02020"]
    ],
    macd: [
        [1068, 1111, 675, 676, "#c01018"], [1112, 1155, 674, 676, "#c81018"], [1156, 1199, 673, 676, "#d01018"],
        [1200, 1243, 672, 676, "#d81010"], [1245, 1288, 673, 676, "#d01018"], [1289, 1332, 674, 676, "#c81018"],
        [1333, 1376, 674, 676, "#c81018"], [1377, 1420, 674, 676, "#c81018"], [1422, 1465, 663, 676, "#e01010"],
        [1199, 1377, 670, 672, "#b88098"]
    ]
};

// horizontal reference lines: top, bottom, colour
const levels = {
    psy: [466, 467, "#808080"],
    sto1: [504, 505, "#808080"],
    sto2: [538, 539, "#b01820"],
    rsi: [574, 576, "#808080"]
};

// [x, y] of the signal arrows
const signals = {
    psy: { up: [[1044, 468]], down: [] },
    sto1: {
        up: [[160, 506], [337, 503], [646, 510], [1000, 510], [1398, 506]],
        down: [[27, 491], [292, 493], [381, 494], [779, 496], [1266, 494]]
    },
    sto2: {
        up: [[204, 538], [337, 537], [735, 540], [1133, 545], [1398, 542]],
        down: [[71, 526], [292, 526], [381, 526], [779, 529], [1354, 533]]
    },
    rsi: {
        up: [[690, 575], [1133, 574], [1443, 572]],
        down: [[867, 564], [1266, 563]]
    }
};

drawPrice();
drawVolume();

for (const id in areas) {
    const svg = $(id);
    if (levels[id]) rect(svg, 5, 1819, ...levels[id]);
    areas[id].forEach(area => rect(svg, ...area));
    if (signals[id]) {
        signals[id].up.forEach(([x, y]) => arrow(svg, x, y, true));
        signals[id].down.forEach(([x, y]) => arrow(svg, x, y, false));
    }
}
line($("macd"), "735,675.500 760,674.500 790,673.500 812,672.500 846,672.500 847,673.500 890,673.500 891,672.500 1023,672.500 1090,673.500 1111,671.500 1155,670.500 1199,670.500", "#d88850");
line($("macd"), "1090,673.500 1155,672.500 1377,671.500 1400,671.500 1443,669.500", "#a080c8");
line($("macd"), "1400,670 1421,667 1443,663", "#e08838");

// every pane has the same two corner buttons
document.querySelectorAll(".plot").forEach(plot => {
    plot.insertAdjacentHTML("beforeend",
        `<div class="pane-buttons">
            <button aria-label="최대화"><svg viewBox="0 0 6 6"><path d="M1 3h4" stroke-width="2"/></svg></button>
            <button class="close" aria-label="닫기"><svg viewBox="0 0 6 6"><path d="M1 1l4 4M5 1L1 5"/></svg></button>
        </div>`);
});
```
